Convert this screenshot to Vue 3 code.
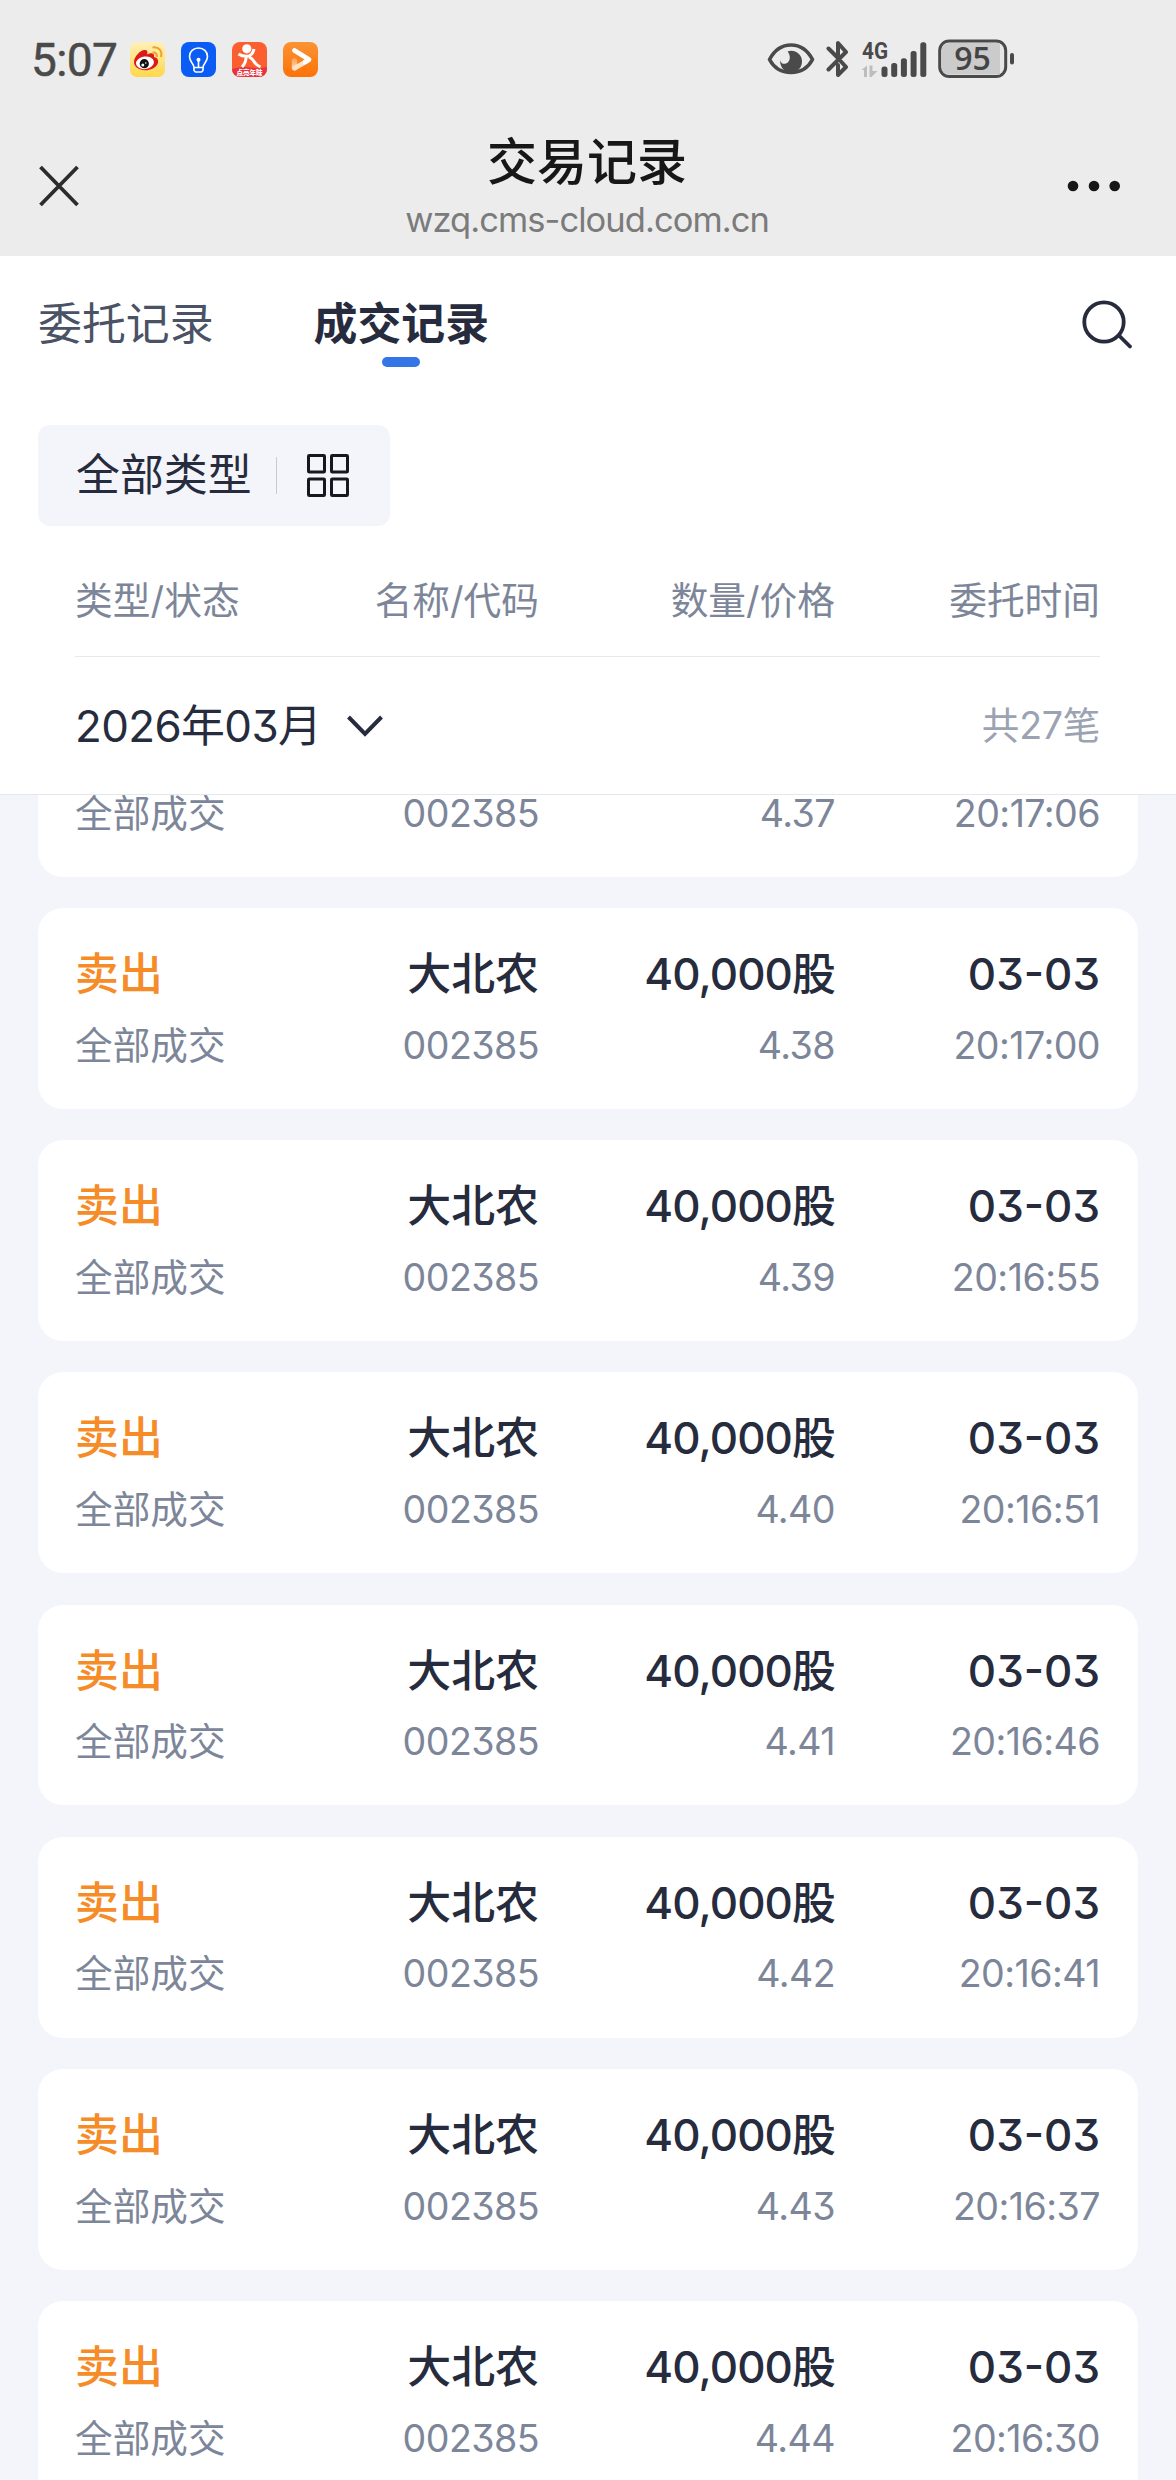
<script setup>
import { ref } from 'vue'

const tabs = ['委托记录', '成交记录']
const activeTab = ref(1)

const columns = ['类型/状态', '名称/代码', '数量/价格', '委托时间']

const signalBars = [10.5, 14, 18.7, 26, 34.7]

const records = [
  { price: '4.37', time: '20:17:06' },
  { price: '4.38', time: '20:17:00' },
  { price: '4.39', time: '20:16:55' },
  { price: '4.40', time: '20:16:51' },
  { price: '4.41', time: '20:16:46' },
  { price: '4.42', time: '20:16:41' },
  { price: '4.43', time: '20:16:37' },
  { price: '4.44', time: '20:16:30' }
]
</script>

<template>
  <div class="page">
    <header class="top">
      <div class="status">
        <span class="clock">5:07</span>
        <div class="apps">
          <svg width="35" height="35" viewBox="0 0 35 35">
            <defs>
              <linearGradient id="weiboBg" x1="0" y1="0" x2="0" y2="1">
                <stop offset="0" stop-color="#fff0b8" />
                <stop offset="1" stop-color="#ffd84a" />
              </linearGradient>
            </defs>
            <rect width="35" height="35" rx="7" fill="url(#weiboBg)" />
            <path
              d="M4 20C4 15 10 8 14.500 8C17.500 8 18 10 17 12.500C21 10.500 25 11 24 15C28 16 29 19 27.500 22C25 27 18 29 13 28C7 27 4 24 4 20Z"
              fill="#dc1a1a"
            />
            <ellipse cx="15" cy="20.800" rx="9" ry="6.300" fill="#fff" transform="rotate(-8 15 20.800)" />
            <circle cx="14.300" cy="21.700" r="4.600" fill="#111" />
            <circle cx="12.800" cy="23" r="1.500" fill="#fff" />
            <circle cx="15.800" cy="21" r="0.800" fill="#fff" />
            <path d="M22.500 10.500C25.500 10 27.500 12 26.800 15" fill="none" stroke="#f2a025" stroke-width="2" />
            <path d="M22.500 5.500C29 4.500 32.500 9 31 15" fill="none" stroke="#f2a025" stroke-width="2" />
          </svg>
          <svg width="35" height="35" viewBox="0 0 35 35">
            <rect width="35" height="35" rx="8" fill="#0a5cf5" />
            <g fill="none" stroke="#fff" stroke-width="1.600" stroke-linejoin="round" stroke-linecap="round">
              <path d="M13 25.500C13 21.500 8.500 20 8.500 14.500C8.500 9.500 12.500 6 17.500 6S26.500 9.500 26.500 14.500C26.500 20 22 21.500 22 25.500Z" />
              <path d="M13 25.500V28.500L14.500 30H20.500L22 28.500V25.500" />
              <path d="M17.500 19V25" />
            </g>
            <circle cx="17.500" cy="17.800" r="2" fill="#fff" />
          </svg>
          <svg width="35" height="35" viewBox="0 0 35 35">
            <defs>
              <clipPath id="dpClip"><rect width="35" height="35" rx="8" /></clipPath>
            </defs>
            <g clip-path="url(#dpClip)">
              <rect width="35" height="35" fill="#fb5f30" />
              <path d="M0 27Q10 24 19 25.500T35 25V35H0Z" fill="#e63340" />
            </g>
            <circle cx="14.800" cy="6.800" r="4.600" fill="#fff" />
            <path
              d="M6.500 12Q10 14.500 15 14.300Q20.500 14 22 7M14 14Q14.500 20 10 25M17 15Q20 16 22 19.500T28.500 25"
              fill="none"
              stroke="#fff"
              stroke-width="3"
            />
            <text x="17.500" y="32.500" class="dp-text" text-anchor="middle">点亮年味</text>
          </svg>
          <svg width="35" height="35" viewBox="0 0 35 35">
            <defs>
              <linearGradient id="playBg" x1="0" y1="0" x2="0" y2="1">
                <stop offset="0" stop-color="#fb9334" />
                <stop offset="1" stop-color="#fc7208" />
              </linearGradient>
              <linearGradient id="playTail" x1="0" y1="0" x2="0" y2="1">
                <stop offset="0" stop-color="#fff" stop-opacity="0.200" />
                <stop offset="1" stop-color="#fff" stop-opacity="0.850" />
              </linearGradient>
            </defs>
            <rect width="35" height="35" rx="8" fill="url(#playBg)" />
            <rect x="8.800" y="16" width="5.400" height="12.500" rx="2.700" fill="url(#playTail)" />
            <path d="M12 26L25 18.500" fill="none" stroke="#ffe3c6" stroke-width="4.600" stroke-linecap="round" />
            <path d="M11.500 8.500L26 17.500L22 20" fill="none" stroke="#fff" stroke-width="4.800" stroke-linecap="round" stroke-linejoin="round" />
          </svg>
        </div>
        <div class="system">
          <svg width="48" height="34" viewBox="0 0 48 34">
            <path
              d="M2.500 17.500C7 9 14.500 3 24 3S41 9 45.500 17.500C41 26 33.500 30.500 24 30.500S7 26 2.500 17.500Z"
              fill="none"
              stroke="#4a4a4a"
              stroke-width="3.600"
              stroke-linejoin="round"
            />
            <path
              d="M20.500 9.500C27 7 35 11.500 35 19.500C35 26 30 30.500 24 30.500S13 26 13 18C14 21.500 16.500 22.500 19 21.500C23.500 20 24 13.500 20.500 9.500Z"
              fill="#4a4a4a"
            />
          </svg>
          <svg class="bluetooth" width="24" height="38" viewBox="0 0 24 38">
            <path
              d="M2.500 29.500L20 12L12 3V16M2.500 8.500L11 17M12 25V35L20 27L15 21.500"
              fill="none"
              stroke="#4a4a4a"
              stroke-width="4"
              stroke-linecap="round"
              stroke-linejoin="round"
            />
          </svg>
          <svg class="signal" width="68" height="37" viewBox="0 0 68 37">
            <text x="1" y="18" class="net" textLength="26" lengthAdjust="spacingAndGlyphs">4G</text>
            <path d="M0.500 29L6 24.500V36H3V29ZM8.500 24.500H11.500V30H16.500L10.500 36H8.500Z" fill="#bdbdbd" />
            <rect
              v-for="(h, i) in signalBars"
              :key="i"
              :x="20.500 + i * 9.700"
              :y="36 - h"
              width="6"
              :height="h"
              rx="2.500"
              fill="#4a4a4a"
            />
          </svg>
          <svg class="battery" width="77" height="40" viewBox="0 0 77 40">
            <rect x="1.700" y="2" width="66" height="35.500" rx="9.500" fill="#e6e6e6" stroke="#4a4a4a" stroke-width="3" />
            <path d="M12 4H62V35.500H12Q3.500 35.500 3.500 27V12.500Q3.500 4 12 4Z" fill="#cbcbcb" />
            <rect x="72" y="14" width="4" height="11.500" rx="2" fill="#4a4a4a" />
            <text x="34.500" y="31" class="level" text-anchor="middle">95</text>
          </svg>
        </div>
      </div>
      <div class="nav">
        <svg class="close" width="44" height="46" viewBox="0 0 44 46">
          <path d="M3.500 4L40.500 42M40.500 4L3.500 42" stroke="#2c2c2c" stroke-width="3.800" />
        </svg>
        <div class="heading">
          <h1>交易记录</h1>
          <p>wzq.cms-cloud.com.cn</p>
        </div>
        <svg class="more" width="54" height="12" viewBox="0 0 54 12">
          <circle cx="6" cy="6" r="5.300" />
          <circle cx="27" cy="6" r="5.300" />
          <circle cx="47.700" cy="6" r="5.300" />
        </svg>
      </div>
    </header>

    <section class="panel">
      <div class="tabs">
        <button
          v-for="(tab, i) in tabs"
          :key="tab"
          :class="['tab', { active: i === activeTab }]"
          @click="activeTab = i"
        >
          {{ tab }}
        </button>
        <svg class="search" width="52" height="52" viewBox="0 0 52 52">
          <circle cx="23" cy="24" r="19.700" />
          <path d="M38 37.500L49 48.500" />
        </svg>
      </div>

      <div class="filter">
        <span>全部类型</span>
        <i></i>
        <svg width="42" height="43" viewBox="0 0 42 43">
          <rect x="1.500" y="1.500" width="16" height="16.500" rx="0.800" />
          <rect x="24.500" y="1.500" width="16" height="16.500" rx="0.800" />
          <rect x="1.500" y="25" width="16" height="16.500" rx="0.800" />
          <rect x="24.500" y="25" width="16" height="16.500" rx="0.800" />
        </svg>
      </div>

      <div class="grid labels">
        <span v-for="c in columns" :key="c">{{ c }}</span>
      </div>

      <div class="month">
        <span class="date">2026年03月</span>
        <svg width="38" height="24" viewBox="0 0 38 24">
          <path d="M2.500 3L19 20L35.500 3" />
        </svg>
        <span class="count">共27笔</span>
      </div>
    </section>

    <main class="list">
      <article v-for="r in records" :key="r.time" class="card">
        <div class="grid main">
          <span class="sell">卖出</span>
          <span>大北农</span>
          <span class="amount">40,000股</span>
          <span>03-03</span>
        </div>
        <div class="grid sub">
          <span>全部成交</span>
          <span>002385</span>
          <span>{{ r.price }}</span>
          <span>{{ r.time }}</span>
        </div>
      </article>
    </main>
  </div>
</template>

<style>
body {
  margin: 0;
  background: #f4f5fa;
}
</style>

<style scoped>
* {
  box-sizing: border-box;
}
.page {
  width: 1176px;
  height: 2480px;
  overflow: hidden;
  display: flex;
  flex-direction: column;
  background: #f4f5fa;
  font-family: Inter, 'Noto Sans CJK SC', sans-serif;
  font-feature-settings: 'cv09' 1;
  color: #262c3d;
}
svg {
  display: block;
  flex: none;
}

.top {
  flex: none;
  height: 256px;
  background: #ececec;
}
.status {
  height: 116px;
  padding: 2px 161px 0 31px;
  display: flex;
  align-items: center;
}
.clock {
  width: 99px;
  margin-top: 2px;
  font-family: Roboto, sans-serif;
  font-size: 46px;
  letter-spacing: -0.6px;
  color: #4a4a4a;
  -webkit-text-stroke: 0.5px #4a4a4a;
}
.apps {
  display: flex;
  gap: 16px;
}
.dp-text {
  font-family: 'Noto Sans CJK SC', sans-serif;
  font-size: 6.5px;
  font-weight: 900;
  fill: #fff;
}
.system {
  margin-left: auto;
  display: flex;
  align-items: center;
}
.bluetooth {
  margin-left: 11px;
}
.signal {
  margin-left: 11px;
}
.battery {
  margin-left: 9px;
}
.net {
  font-family: Roboto, sans-serif;
  font-size: 23px;
  font-weight: 700;
  fill: #4a4a4a;
}
.level {
  font-family: 'Open Sans', sans-serif;
  font-size: 32px;
  font-weight: 600;
  fill: #444;
}

.nav {
  height: 140px;
  padding: 0 55px 0 37px;
  display: grid;
  grid-template-columns: 140px 1fr 124px;
  align-items: center;
}
.heading {
  align-self: start;
  padding-top: 16px;
  text-align: center;
}
h1 {
  margin: 0;
  font-size: 50px;
  line-height: 60px;
  font-weight: 500;
  color: #171717;
}
.heading p {
  margin: 8px 0 0;
  font-size: 34.5px;
  line-height: 40px;
  letter-spacing: -0.95px;
  color: #7b7b7b;
}
.more {
  justify-self: end;
  fill: #171717;
}

.panel {
  flex: none;
  height: 539px;
  background: #fff;
  border-bottom: 1px solid #e6e7eb;
}
.tabs {
  height: 169px;
  padding: 33px 43px 0 38px;
  display: flex;
  align-items: flex-start;
}
.tab {
  position: relative;
  margin: 0 100px 0 0;
  padding: 0;
  border: 0;
  background: none;
  font-family: inherit;
  font-size: 43.9px;
  line-height: 70px;
  color: #4a5265;
}
.tab.active {
  font-weight: 700;
  color: #262c3d;
}
.tab.active::after {
  content: '';
  position: absolute;
  left: 50%;
  bottom: -8px;
  width: 38px;
  height: 10px;
  margin-left: -19px;
  border-radius: 5px;
  background: #3576e6;
}
.search {
  margin: 9px 0 0 auto;
  fill: none;
  stroke: #262c3d;
  stroke-width: 3.8;
  stroke-linecap: round;
}

.filter {
  width: 352px;
  height: 101px;
  margin-left: 38px;
  padding-left: 38px;
  display: flex;
  align-items: center;
  border-radius: 12px;
  background: #f4f5fa;
  font-size: 43.9px;
  line-height: 60px;
}
.filter span {
  margin-top: -2px;
}
.filter i {
  width: 1px;
  height: 37px;
  margin: 0 30px 0 24px;
  background: #c9cbd1;
}
.filter svg {
  fill: none;
  stroke: #16181f;
  stroke-width: 3;
}

.grid {
  display: grid;
  grid-template-columns: 226px 238px 296px 265px;
}
.grid span {
  text-align: right;
  white-space: nowrap;
}
.grid span:first-child {
  text-align: left;
  letter-spacing: 0.1px;
}
.labels {
  height: 131px;
  margin: 0 76px 0 75px;
  padding-top: 44px;
  border-bottom: 1px solid #e8e9ec;
  font-size: 37.7px;
  line-height: 60px;
  color: #7d8699;
}
.month {
  height: 137px;
  padding: 0 76px 0 75px;
  display: flex;
  align-items: center;
  line-height: 60px;
}
.date {
  font-size: 43.9px;
  letter-spacing: -0.6px;
}
.month svg {
  margin-left: 25px;
  fill: none;
  stroke: #262c3d;
  stroke-width: 4;
}
.count {
  margin-left: auto;
  font-size: 37.6px;
  letter-spacing: -0.3px;
  color: #9ba3b3;
}

/* the list is scrolled, its first card runs under the panel */
.list {
  flex: 1;
  min-height: 0;
  overflow: hidden;
  padding: 0 38px;
}
.card {
  height: 200.8px;
  margin-bottom: 31.36px;
  padding: 35px 38px 0 37px;
  border-radius: 25px;
  background: #fff;
}
.card:first-child {
  margin-top: -119px;
}
.main {
  font-size: 43.9px;
  line-height: 62px;
  font-weight: 500;
}
.main .amount {
  letter-spacing: -0.9px;
}
.sell {
  color: #f58c28;
}
.sub {
  margin-top: 18.6px;
  font-size: 37.6px;
  line-height: 44px;
  letter-spacing: -0.55px;
  color: #7d8699;
}
</style>
